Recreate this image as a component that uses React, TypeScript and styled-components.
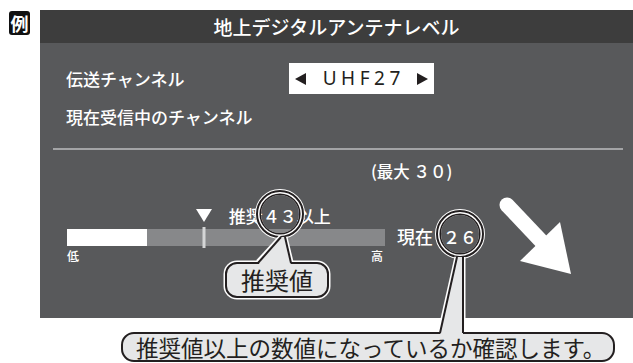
import React from "react";
import styled, { createGlobalStyle } from "styled-components";

const INK = "#231f20";
const CALLOUT = "#e6e7e8";

const GlobalStyle = createGlobalStyle`
  html, body { margin: 0; padding: 0; background: #fff; }
  body { font-family: "Noto Sans CJK JP", "Noto Sans", sans-serif; }
  * { box-sizing: border-box; }
`;

const Page = styled.div`
  position: relative;
  width: 633px;
  height: 363px;
  overflow: hidden;
  padding-top: 10px;
  display: flex;
  flex-direction: column;
`;

const TopRow = styled.div`
  display: flex;
  align-items: flex-start;
`;

const BadgeCol = styled.div`
  width: 40px;
  flex: none;
  padding: 1px 0 0 9px;
`;

const Badge = styled.div`
  width: 21px;
  height: 24px;
  background: #111;
  border-radius: 3px;
  color: #fff;
  font-weight: 700;
  font-size: 18px;
  line-height: 24px;
  text-align: center;
`;

const Panel = styled.section`
  flex: 1;
  height: 308px;
  background: #58595b;
  color: #fff;
  font-weight: 500;
`;

const Header = styled.header`
  height: 33px;
  background: #3d3d3d;
  display: flex;
  align-items: center;
  justify-content: center;
  font-size: 19px;
  color: #fff;
`;

const Body = styled.div`
  padding-top: 20px;
`;

const SettingRow = styled.div<{ $h: number; $mt: number }>`
  display: grid;
  grid-template-columns: 223px auto;
  align-items: center;
  padding-left: 26px;
  height: ${(p) => p.$h}px;
  margin-top: ${(p) => p.$mt}px;
  font-size: 17px;
  line-height: 1;
`;

const Selector = styled.div`
  width: 145px;
  height: 31px;
  background: #fff;
  color: ${INK};
  display: flex;
  align-items: center;
  justify-content: space-between;
  padding: 0 6px;
`;

const Tri = styled.span<{ $dir: "left" | "right" }>`
  width: 0;
  height: 0;
  border-top: 6px solid transparent;
  border-bottom: 6px solid transparent;
  ${(p) =>
    p.$dir === "left"
      ? `border-right: 11px solid ${INK};`
      : `border-left: 11px solid ${INK};`}
`;

const ChannelText = styled.span`
  font-family: "Noto Sans", sans-serif;
  font-weight: 400;
  font-size: 19px;
  letter-spacing: 4.5px;
  margin-right: -4.5px;
  line-height: 1;
`;

const Divider = styled.hr`
  border: none;
  height: 2px;
  background: #a3a4a6;
  margin: 21px 10px 0 13px;
`;

const MaxRow = styled.div`
  margin-top: 10px;
  height: 22px;
  line-height: 22px;
  padding-left: 331px;
  font-size: 16.5px;
`;

const Level = styled.div`
  margin-top: 22px;
  padding-left: 27px;
  display: grid;
  grid-template-columns: 318px auto;
  grid-template-rows: 22px 17px 14px;
  row-gap: 3px;
  column-gap: 12px;
`;

const RecLine = styled.div`
  grid-column: 1;
  grid-row: 1;
  display: flex;
  align-items: center;
  font-size: 17px;
  line-height: 1;
`;

const Pointer = styled.span<{ $pct: number }>`
  margin-left: calc(${(p) => p.$pct}% - 8px);
  width: 0;
  height: 0;
  border-left: 8px solid transparent;
  border-right: 8px solid transparent;
  border-top: 13px solid #fff;
  margin-right: 17px;
`;

const Bar = styled.div`
  grid-column: 1;
  grid-row: 2;
  position: relative;
  background: #87888a;
`;

const BarFill = styled.div<{ $pct: number }>`
  width: ${(p) => p.$pct}%;
  height: 100%;
  background: #fff;
`;

const BarMark = styled.div<{ $pct: number }>`
  position: absolute;
  left: ${(p) => p.$pct}%;
  top: -2px;
  bottom: -2px;
  width: 3px;
  transform: translateX(-50%);
  background: #d4d5d6;
`;

const Ends = styled.div`
  grid-column: 1;
  grid-row: 3;
  display: flex;
  justify-content: space-between;
  padding-right: 2px;
  font-size: 12px;
  line-height: 14px;
`;

const Current = styled.div`
  grid-column: 2;
  grid-row: 2;
  align-self: center;
  display: flex;
  align-items: center;
  font-size: 18px;
  line-height: 1;
  margin-top: -3px;
`;

const CurrentNum = styled.span`
  width: 46px;
  margin-left: 4px;
  text-align: center;
  font-size: 17px;
`;

const NoteBox = styled.div`
  margin: 14px 0 0 121px;
  width: 494px;
  height: 30px;
  border: 2px solid ${INK};
  border-radius: 13px;
  background: ${CALLOUT};
  color: ${INK};
  display: flex;
  align-items: center;
  padding-left: 13px;
  font-size: 22.5px;
  line-height: 1;
  white-space: nowrap;
`;

const Bubble = styled.div`
  position: absolute;
  left: 225px;
  top: 262px;
  width: 104px;
  height: 36px;
  border: 2px solid ${INK};
  border-radius: 12px;
  box-shadow: 0 0 0 1.5px #fff;
  background: ${CALLOUT};
  color: ${INK};
  display: flex;
  align-items: center;
  justify-content: center;
  font-size: 24px;
  line-height: 1;
`;

const Overlay = styled.svg`
  position: absolute;
  left: 0;
  top: 0;
  pointer-events: none;
`;

const Ring = ({ cx, cy }: { cx: number; cy: number }) => (
  <g fill="none">
    <circle cx={cx} cy={cy} r={22} stroke="#fff" strokeWidth={6} />
    <circle cx={cx} cy={cy} r={23} stroke={INK} strokeWidth={2} />
    <circle cx={cx} cy={cy} r={19.8} stroke={INK} strokeWidth={1.5} />
  </g>
);

type TailProps = {
  top: [number, number];
  topR: number;
  botL: number;
  botR: number;
  yBot: number;
};

const Tail = ({ top, topR, botL, botR, yBot }: TailProps) => {
  const [x0, y0] = top;
  return (
    <g>
      <polyline points={`${x0},${y0} ${botL},${yBot}`} stroke="#fff" strokeWidth={5} fill="none" />
      <polyline points={`${topR},${y0} ${botR},${yBot}`} stroke="#fff" strokeWidth={5} fill="none" />
      <polygon points={`${x0},${y0} ${topR},${y0} ${botR},${yBot + 3} ${botL},${yBot + 3}`} fill={CALLOUT} />
      <polyline points={`${x0},${y0} ${botL},${yBot + 1}`} stroke={INK} strokeWidth={2} fill="none" />
      <polyline points={`${topR},${y0} ${botR},${yBot + 1}`} stroke={INK} strokeWidth={2} fill="none" />
    </g>
  );
};

const level = { recommended: 43, fill: 25 };

export default function App() {
  return (
    <>
      <GlobalStyle />
      <Page>
        <TopRow>
          <BadgeCol>
            <Badge>例</Badge>
          </BadgeCol>
          <Panel>
            <Header>地上デジタルアンテナレベル</Header>
            <Body>
              <SettingRow $h={31} $mt={0}>
                <span>伝送チャンネル</span>
                <Selector>
                  <Tri $dir="left" />
                  <ChannelText>UHF27</ChannelText>
                  <Tri $dir="right" />
                </Selector>
              </SettingRow>
              <SettingRow $h={22} $mt={11}>
                <span>現在受信中のチャンネル</span>
              </SettingRow>
              <Divider />
              <MaxRow>(最大 ３０)</MaxRow>
              <Level>
                <RecLine>
                  <Pointer $pct={level.recommended} />
                  <span>推奨４３以上</span>
                </RecLine>
                <Bar>
                  <BarFill $pct={level.fill} />
                  <BarMark $pct={level.recommended} />
                </Bar>
                <Ends>
                  <span>低</span>
                  <span>高</span>
                </Ends>
                <Current>
                  <span>現在</span>
                  <CurrentNum>２６</CurrentNum>
                </Current>
              </Level>
            </Body>
          </Panel>
        </TopRow>
        <NoteBox>推奨値以上の数値になっているか確認します。</NoteBox>
        <Bubble>推奨値</Bubble>
        <Overlay width={633} height={363} viewBox="0 0 633 363">
          <line x1={507} y1={205} x2={543} y2={243} stroke="#fff" strokeWidth={15} strokeLinecap="round" />
          <polygon points="520,261 571,274 560,222" fill="#fff" />
          <Ring cx={280} cy={214} />
          <Tail top={[281, 237]} topR={285} botL={258} botR={291} yBot={262} />
          <Ring cx={460} cy={234} />
          <Tail top={[457, 257]} topR={463} botL={440} botR={463} yBot={332} />
        </Overlay>
      </Page>
    </>
  );
}
